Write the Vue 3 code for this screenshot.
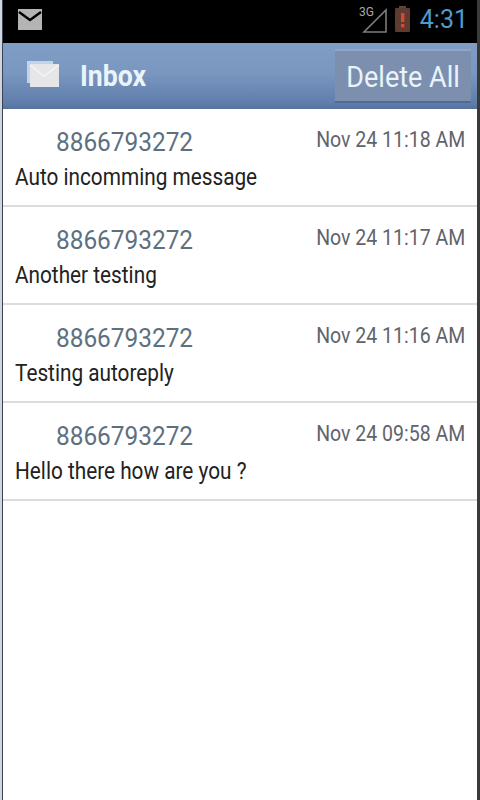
<script setup>
const messages = [
  { from: '8866793272', date: 'Nov 24 11:18 AM', body: 'Auto incomming message' },
  { from: '8866793272', date: 'Nov 24 11:17 AM', body: 'Another testing' },
  { from: '8866793272', date: 'Nov 24 11:16 AM', body: 'Testing autoreply' },
  { from: '8866793272', date: 'Nov 24 09:58 AM', body: 'Hello there how are you ?' },
]
</script>

<template>
  <div class="phone">
    <div class="screen">
      <div class="status">
        <svg class="mail" width="26" height="22" viewBox="0 0 26 22">
          <rect x="0" y="0" width="24" height="21" fill="#b4b4b4" />
          <path d="M1 3 L12 11 L23 3" fill="none" stroke="#000" stroke-width="2.4" />
        </svg>
        <div class="status-right">
          <svg class="signal" width="30" height="28" viewBox="0 0 30 28">
            <path d="M27 5 L27 27 L5 27 Z" fill="none" stroke="#7c7c7c" stroke-width="1.6" />
            <text x="0" y="11" class="three-g">3G</text>
          </svg>
          <svg class="battery" width="17" height="26" viewBox="0 0 17 26">
            <rect x="5" y="0" width="7" height="3" fill="#5a4640" />
            <rect x="1" y="2" width="15" height="24" rx="1" fill="#5f3a30" />
            <rect x="7" y="7" width="3.4" height="9" fill="#d8492c" />
            <rect x="7" y="18" width="3.4" height="3.4" fill="#d8492c" />
          </svg>
          <span class="clock">4:31</span>
        </div>
      </div>
      <div class="header">
        <svg class="envelope" width="33" height="27" viewBox="0 0 33 27">
          <rect x="0" y="0" width="26" height="22" fill="#c3d3ea" />
          <rect x="3" y="3" width="29" height="23" fill="#e6e5e8" />
          <path d="M3 4 L17 15 L32 4" fill="none" stroke="#f5f5f6" stroke-width="1.5" />
        </svg>
        <span class="title">Inbox</span>
        <button class="delete"><span class="delete-text">Delete All</span></button>
      </div>
      <div class="list">
        <div v-for="m in messages" :key="m.date" class="row">
          <div class="top">
            <span class="from">{{ m.from }}</span>
            <span class="date">{{ m.date }}</span>
          </div>
          <div class="body">{{ m.body }}</div>
        </div>
      </div>
    </div>
  </div>
</template>

<style>
html, body { margin: 0; background: #fff; }
</style>

<style scoped>
.phone {
  width: 480px;
  height: 800px;
  box-sizing: border-box;
  padding-left: 2px;
  background: #cdd6e2;
  overflow: hidden;
  font-family: Roboto, "Liberation Sans", sans-serif;
}
.screen {
  height: 100%;
  box-sizing: border-box;
  border-left: 1px solid #3c4250;
  border-right: 3px solid #3a3a3a;
  background: #fff;
  display: flex;
  flex-direction: column;
}
.status {
  height: 43px;
  flex: none;
  background: #000;
  display: flex;
  align-items: center;
  justify-content: space-between;
  padding: 0 9px 0 15px;
}
.mail { margin-top: -3px; }
.status-right { display: flex; align-items: center; }
.signal { margin-right: 5px; margin-top: -5px; }
.three-g { font-family: Roboto, sans-serif; font-size: 12px; fill: #a8a8a8; }
.battery { margin-right: 9px; margin-top: -5px; }
.clock {
  font-size: 25px;
  color: #4d9ccb;
  line-height: 1;
  margin-top: -4px;
}
.header {
  height: 66px;
  flex: none;
  box-sizing: border-box;
  padding: 0 6px 0 24px;
  display: flex;
  align-items: center;
  background: linear-gradient(#809dc6, #7a97c0 45%, #5f7dab 92%, #56709a);
}
.envelope { margin-top: -3px; }
.title {
  margin-left: 20px;
  font-size: 29px;
  font-weight: 700;
  color: #eaf4fb;
  transform: scaleX(0.92);
  transform-origin: left;
}
.delete {
  margin-left: auto;
  width: 136px;
  height: 54px;
  padding: 0;
  border: none;
  border-top: 2px solid #93a5c2;
  border-bottom: 2px solid #4e6a9a;
  background: #7d8fae;
  color: #e9f3fa;
  font: 400 30px Roboto, sans-serif;
}
.delete-text {
  display: inline-block;
  transform: scaleX(0.9);
  white-space: nowrap;
}
.list { flex: none; }
.row {
  height: 98px;
  box-sizing: border-box;
  border-bottom: 2px solid #dcdcdc;
  padding: 15px 12px 0 12px;
}
.top { display: flex; justify-content: space-between; }
.from {
  margin-left: 41px;
  font-size: 26px;
  color: #5d7080;
  line-height: 36px;
  transform: scaleX(0.938);
  transform-origin: left;
}
.date {
  font-size: 22px;
  color: #5f646b;
  line-height: 32px;
  transform: scaleX(0.886);
  transform-origin: right;
}
.body {
  font-size: 23px;
  color: #222;
  line-height: 34px;
  margin-top: 1px;
  transform: scaleX(0.903);
  transform-origin: left;
}
</style>
